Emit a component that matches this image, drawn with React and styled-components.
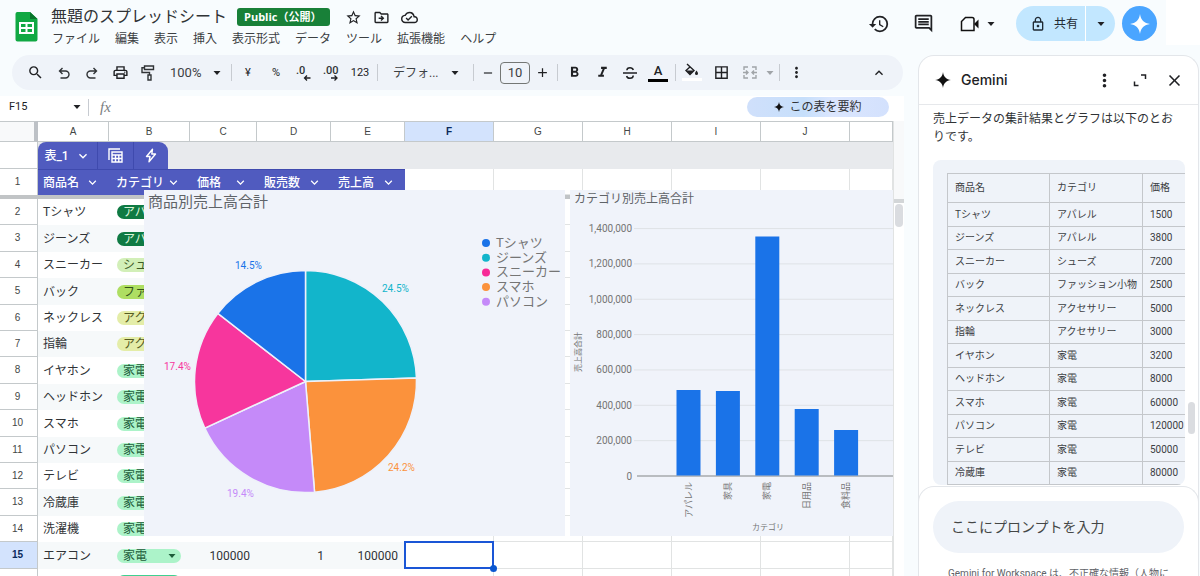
import React from "react";
import styled, { createGlobalStyle } from "styled-components";
import {
  MdStarBorder, MdOutlineDriveFileMove, MdOutlineCloudDone, MdHistory, MdOutlineInsertComment,
  MdSearch, MdOutlinePrint, MdFormatBold, MdFormatItalic,
  MdBorderAll, MdMoreVert, MdKeyboardArrowUp, MdKeyboardArrowDown,
  MdClose, MdOutlineLock, MdAdd, MdRemove,
} from "react-icons/md";

const cjk = '"Noto Sans CJK JP", sans-serif';
const ui = `Roboto, ${cjk}`;

const Global = createGlobalStyle`
  * { box-sizing: border-box; }
  body { margin: 0; background: #f8fcfe; color: #3c4043; font: 12px/16px ${ui}; overflow: hidden; }
  button, input, select { font: inherit; color: inherit; border: 0; padding: 0; margin: 0; background: none; }
  table { border-collapse: collapse; border-spacing: 0; }
  th { font-weight: 400; }
  svg { display: block; flex: none; }
`;

const Page = styled.div`
  display: flex;
  flex-direction: column;
  height: 100vh;
  overflow: hidden;
`;

/* ---------- header ---------- */
const Header = styled.header`
  display: flex;
  align-items: flex-start;
  height: 55px;
  flex: none;
  padding-left: 15px;
`;
const Logo = styled.a`
  width: 23px;
  margin: 11px 13px 0 0;
`;
const Titles = styled.div`
  padding-top: 4px;
  flex: 1;
`;
const TitleRow = styled.div`
  display: flex;
  align-items: center;
  height: 26px;
`;
const Title = styled.h1`
  margin: 0 10px 0 0;
  font: 400 16px/24px ${ui};
  color: #303336;
`;
const Badge = styled.span`
  background: #188038;
  color: #fff;
  font: 700 11px/18px "Open Sans", ${cjk};
  width: 93px;
  padding-left: 7px;
  border-radius: 3px;
  white-space: nowrap;
  margin-right: 9px;
`;
const IconButton = styled.button`
  display: inline-flex;
  align-items: center;
  justify-content: center;
  flex: none;
  width: ${(p) => p.$w || 28}px;
  height: ${(p) => p.$h || 28}px;
  color: ${(p) => p.$color || "#202124"};
  font-size: 11px;
`;
const Menu = styled.nav`
  display: flex;
  gap: 15px;
  padding-left: 1px;
  height: 18px;
  line-height: 18px;
  button { color: #3c4043; white-space: nowrap; }
`;
const Actions = styled.div`
  display: flex;
  align-items: center;
  height: 35px;
  margin-top: 6px;
  padding-right: 9px;
`;
const CallGroup = styled.div`
  display: flex;
  align-items: center;
  margin: 0 19px 0 10px;
`;
const Share = styled.div`
  display: flex;
  height: 35px;
  margin-right: 7px;
  border-radius: 18px;
  background: #c2e7ff;
  overflow: hidden;
  color: #1f2a33;
`;
const ShareMain = styled.button`
  display: flex;
  align-items: center;
  gap: 8px;
  width: 70px;
  padding-left: 14px;
  border-right: 1px solid #fff;
`;
const GeminiButton = styled.button`
  display: flex;
  align-items: center;
  justify-content: center;
  width: 35px;
  height: 35px;
  border-radius: 50%;
  background: #4aa5ff;
`;
const Corner = styled.div`
  width: 34px;
  height: 45px;
  background: #fff;
`;

/* ---------- body ---------- */
const Body = styled.div`
  display: flex;
  flex: 1;
  min-height: 0;
  gap: 14px;
  padding-right: 1px;
`;
const Workspace = styled.main`
  display: flex;
  flex-direction: column;
  flex: 1;
  min-width: 0;
`;
const Toolbar = styled.div`
  display: flex;
  align-items: center;
  flex: none;
  height: 35px;
  margin: 0 1px 6px 12px;
  padding: 0 10px 0 8px;
  border-radius: 18px;
  background: #eff3f9;
`;
const Divider = styled.span`
  width: 6px;
  height: 17px;
  flex: none;
  background: linear-gradient(#c7cbd1, #c7cbd1) center / 1px 100% no-repeat;
`;
const Drop = styled.label`
  display: flex;
  align-items: center;
  flex: none;
  width: ${(p) => p.$w}px;
  padding: 0 ${(p) => p.$end}px 0 ${(p) => p.$start}px;
  font-size: ${(p) => p.$size || 12}px;
  select { appearance: none; flex: 1; min-width: 0; outline: 0; }
`;
const SizeInput = styled.input`
  width: 30px;
  height: 22px;
  border: 1px solid #747775;
  border-radius: 4px;
  text-align: center;
  font-size: 13px;
`;
const Swatch = styled.span`
  display: flex;
  flex-direction: column;
  align-items: center;
  font: 500 13px/14px ${ui};
  &::after {
    content: "";
    width: 20px;
    height: 3px;
    margin-top: 1px;
    background: ${(p) => p.$bar};
  }
`;
const Spacer = styled.span`
  flex: 1;
`;
const FormulaBar = styled.div`
  display: flex;
  align-items: center;
  height: 25px;
  flex: none;
  padding: 0 15px 3px 9px;
  background: #fff;
`;
const NameBox = styled.input`
  width: 60px;
  height: 16px;
  font-size: 11px;
  color: #202124;
`;
const Fx = styled.span`
  margin-left: 9px;
  font: italic 15px/16px "Liberation Serif", serif;
  color: #7a7d80;
`;
const Summarize = styled.button`
  display: flex;
  align-items: center;
  justify-content: center;
  gap: 5px;
  width: 142px;
  height: 20px;
  border-radius: 10px;
  background: linear-gradient(90deg, #d0e0fb, #c6dffb 40%, #dbe6fe 60%, #d3e1fd);
  color: #303336;
`;

/* ---------- sheet ---------- */
const SheetArea = styled.div`
  display: flex;
  flex: 1;
  min-height: 0;
  overflow: hidden;
  background: #fff;
`;
const Grid = styled.div`
  position: relative;
  flex: 1;
  min-width: 0;
`;
const SheetTable = styled.table`
  width: 100%;
  table-layout: fixed;
  border-collapse: separate;
`;
const Letter = styled.th`
  height: 21px;
  padding: 0;
  border: solid #c4c9cb;
  border-width: 1px 1px 1px 0;
  background: ${(p) => (p.$on ? "#d3e3fd" : "#fff")};
  color: ${(p) => (p.$on ? "#0b2a5c" : "#444746")};
  font: ${(p) => (p.$on ? 700 : 400)} 10px/19px "Liberation Sans", sans-serif;
  overflow: hidden;
`;
const SelectAll = styled(Letter)`
  background: #f8f9fa;
  border-right: 4px solid #bdc1c6;
`;
const RowHead = styled.th`
  padding: 0 2px 0 0;
  border-right: 1px solid #c4c9cb;
  border-bottom: ${(p) => (p.$plain ? 0 : 1)}px solid #c4c9cb;
  background: ${(p) => (p.$on ? "#d3e3fd" : "#fff")};
  color: ${(p) => (p.$on ? "#0b2a5c" : "#444746")};
  font: ${(p) => (p.$on ? 700 : 400)} 10px/16px "Liberation Sans", sans-serif;
`;
const TabCell = styled.td`
  padding: 0;
  height: 27px;
  background: #e8eaed;
`;
const TableTab = styled.div`
  display: flex;
  width: 130px;
  height: 27px;
  border-radius: 8px 9px 0 0;
  background: #505bbf;
  color: #fff;
  overflow: hidden;
  button { color: #fff; height: 27px; display: flex; align-items: center; justify-content: center; }
  button + button { border-left: 1px solid #3f4aae; }
  button:first-child { width: 59px; gap: 6px; font-weight: 500; }
  button:nth-child(2) { width: 36px; }
  button:last-child { width: 35px; }
`;
const FieldHead = styled.th`
  height: 26px;
  padding: 0 9px 0 ${(p) => (p.$first ? 5 : 7)}px;
  background: #505bbf;
  border-top: 1px solid #3f4aae;
  color: #fff;
  font-weight: 500;
  div { display: flex; justify-content: space-between; align-items: center; white-space: nowrap; }
`;
const FreezeBar = styled.td`
  height: 4px;
  padding: 0;
  background: #c1c4c6;
`;
const BodyRow = styled.tr`
  height: 26px;
  &:nth-child(5n + 2), &:nth-child(5n + 4) { height: 27px; }
  &:nth-child(even) td:not([data-open]) { background: #f6f9fa; }
`;
const Cell = styled.td`
  padding: 0 7px 0 ${(p) => (p.$first ? 5 : 8)}px;
  text-align: ${(p) => (p.$num ? "right" : "left")};
  white-space: nowrap;
  overflow: hidden;
  color: #303336;
`;
const OpenCell = styled.td`
  padding: 0;
  border: solid #e1e3e3;
  border-width: 0 1px 1px 0;
`;
const ActiveCell = styled(OpenCell)`
  position: relative;
  &::before {
    content: "";
    position: absolute;
    inset: -1px;
    border: 2px solid #1a56d6;
  }
  &::after {
    content: "";
    position: absolute;
    right: -4px;
    bottom: -4px;
    width: 7px;
    height: 7px;
    border-radius: 50%;
    background: #0b57d0;
  }
`;
const Chip = styled.span`
  display: flex;
  align-items: center;
  justify-content: space-between;
  width: 64px;
  height: 14px;
  padding: 0 5px 0 6px;
  border-radius: 7px;
  background: ${(p) => p.$bg};
  color: ${(p) => p.$fg};
  line-height: 14px;
`;
const Chart = styled.figure`
  position: absolute;
  margin: 0;
  top: 69px;
  left: ${(p) => p.$left}px;
  right: ${(p) => (p.$fill ? "0" : "auto")};
  height: 346px;
  background: #f0f3fa;
  overflow: hidden;
`;
const ScrollRail = styled.div`
  width: 11px;
  flex: none;
  border-left: 1px solid #e1e3e3;
  background: #fff;
  &::before {
    content: "";
    display: block;
    height: 78px;
    background: #f8f9fa;
    border-bottom: 4px solid #d3d6d8;
  }
  &::after {
    content: "";
    display: block;
    width: 8px;
    height: 23px;
    margin: 1px 0 0 1px;
    border-radius: 4px;
    background: #dadce0;
  }
`;

/* ---------- Gemini panel ---------- */
const Panel = styled.aside`
  position: relative;
  display: flex;
  flex-direction: column;
  width: 281px;
  flex: none;
  border: 1px solid #e3e6ea;
  border-bottom: 0;
  border-radius: 16px 16px 0 0;
  background: #fff;
  overflow: hidden;
`;
const PanelHead = styled.div`
  display: flex;
  align-items: center;
  flex: none;
  height: 49px;
  padding: 0 6px 0 16px;
  border-bottom: 1px solid #e6e8eb;
  h2 { flex: 1; margin: 0 0 0 10px; font: 500 14px/20px Inter, sans-serif; color: #202124; }
`;
const PanelBody = styled.div`
  flex: 1;
  min-height: 0;
  overflow: hidden;
  padding: 5px 13px 0 14px;
  p { margin: 0 0 14px; padding-right: 8px; line-height: 18px; color: #303336; }
`;
const Card = styled.div`
  padding: 13px 0 0 14px;
  border-radius: 8px;
  background: #eff3f9;
  overflow: hidden;
`;
const DataTable = styled.table`
  width: 270px;
  table-layout: fixed;
  font-size: 10px;
  line-height: 14px;
  color: #3c4043;
  th, td { border: 1px solid #c4c7cb; padding: 0 7px; text-align: left; white-space: nowrap; }
  thead tr { height: 29px; }
  tbody tr { height: 24px; }
  tbody tr:nth-child(even) { height: 23px; }
`;
const PanelThumb = styled.span`
  position: absolute;
  right: 3px;
  top: 346px;
  width: 7px;
  height: 32px;
  border-radius: 4px;
  background: #dadce0;
`;
const PanelFoot = styled.form`
  flex: none;
  height: 90px;
  margin: 0 -1px;
  padding: 14px 14px 0;
  border: 1px solid #e3e6ea;
  border-bottom: 0;
  border-radius: 16px 16px 0 0;
  background: #fff;
  overflow: hidden;
`;
const Prompt = styled.input`
  display: block;
  width: 100%;
  height: 52px;
  padding: 0 18px;
  border-radius: 26px;
  background: #eff3f9;
  font-size: 14px;
  outline: 0;
  &::placeholder { color: #444746; opacity: 1; }
`;
const Note = styled.small`
  display: block;
  margin: 14px 0 0 15px;
  font-size: 10px;
  line-height: 14px;
  white-space: nowrap;
  color: #5f6368;
`;

/* ---------- drawings ---------- */
const Spark = ({ size, fill = "#111" }) => (
  <svg width={size} height={size} viewBox="0 0 24 24" aria-hidden="true">
    <path fill={fill} d="M12 0C12.9 7 17 11.1 24 12 17 12.9 12.9 17 12 24 11.1 17 7 12.9 0 12 7 11.1 11.1 7 12 0Z" />
  </svg>
);
const Caret = ({ color = "#202124" }) => (
  <svg width="8" height="4" viewBox="0 0 8 4" aria-hidden="true"><path fill={color} d="M.5 0H7.500L4 4Z" /></svg>
);
const SheetsLogo = () => (
  <svg width="23" height="31" viewBox="0 0 23 31" aria-hidden="true">
    <path fill="#11a843" d="M2 1H15L22.500 8V28.500A2 2 0 0 1 20.500 30.500H2.500A2 2 0 0 1 .5 28.500V3A2 2 0 0 1 2 1Z" />
    <path fill="#07752b" d="M15 1L22.500 8H15Z" />
    <path fill="#fff" fillRule="evenodd" d="M4 11H19V23H4ZM6 13V16H10.500V13ZM12.500 13V16H17V13ZM6 18V21H10.500V18ZM12.500 18V21H17V18Z" />
  </svg>
);
const Video = () => (
  <svg width="20" height="16" viewBox="0 0 20 16" aria-hidden="true">
    <path fill="none" stroke="#111" strokeWidth="1.500" d="M5.500 1.500H12A2 2 0 0 1 14 3.500V14.500H1.500V5.500Z" />
    <path fill="#111" d="M14 8L18.500 3.500V12.500Z" />
  </svg>
);
const Turn = ({ flip }) => (
  <svg width="12" height="12" viewBox="0 0 12 12" fill="none" stroke="#303336" strokeWidth="1.400" aria-hidden="true">
    <path
      transform={flip ? "translate(12 0) scale(-1 1)" : undefined}
      d="M4.500 1L1.500 4L4.500 7M1.500 4H7.500A3.500 3.500 0 0 1 7.500 11H2.500"
    />
  </svg>
);
const Roller = () => (
  <svg width="14" height="16" viewBox="0 0 14 16" fill="none" stroke="#303336" strokeWidth="1.400" aria-hidden="true">
    <path d="M3.500 1H12.500V4.500H3.500ZM3.500 2.700H1V7.500H8.500V10M7 10H10V15H7Z" />
  </svg>
);
const Strike = () => (
  <svg width="14" height="14" viewBox="0 0 14 14" fill="none" stroke="#202124" strokeWidth="1.500" aria-hidden="true">
    <path d="M10.300 4C9.800 2.400 8.700 1.700 7 1.700C5 1.700 3.900 2.700 3.900 4.300M0 7H14M10.200 9.500C10.200 11.300 9 12.300 7 12.300C5.200 12.300 4 11.500 3.600 10" />
  </svg>
);
const Decimal = ({ label, dir }) => (
  <svg width="18" height="18" viewBox="0 0 18 18" aria-hidden="true">
    <text x={dir === "left" ? 1 : 0} y="10" fontSize="11" fontWeight="500" fill="#303336">{label}</text>
    {dir === "left"
      ? <path fill="none" stroke="#202124" strokeWidth="1.300" d="M15.500 14H9.500M12 11.500L9.500 14L12 16.500" />
      : <path fill="none" stroke="#202124" strokeWidth="1.300" d="M8 14H14M11.500 11.500L14 14L11.500 16.500" />}
  </svg>
);
const Bucket = () => (
  <svg width="20" height="19" viewBox="0 0 20 19" aria-hidden="true">
    <path fill="none" stroke="#202124" strokeWidth="1.400" d="M5 1L12 7.500L8 11.500L4 7.500L8.500 3.500" />
    <path fill="#202124" d="M4 7.500H12L8 11.500ZM14.500 7.500C15.500 9 16 9.800 16 10.500A1.500 1.500 0 0 1 13 10.500C13 9.800 13.500 9 14.500 7.500Z" />
    <path fill="#fff" d="M0 15H20V18H0Z" />
  </svg>
);
const Merge = () => (
  <svg width="14" height="13" viewBox="0 0 14 13" fill="none" stroke="#a0a4a8" strokeWidth="1.400" aria-hidden="true">
    <path d="M5 1H1V4M9 1H13V4M5 12H1V9M9 12H13V9M0 6.500H5M3 4.500L5 6.500L3 8.500M14 6.500H9M11 4.500L9 6.500L11 8.500" />
  </svg>
);
const TableIcon = () => (
  <svg width="15" height="15" viewBox="0 0 15 15" aria-hidden="true">
    <path fill="none" stroke="#fff" strokeWidth="1.400" d="M1 12V1H12M4 4H14V14H4ZM4 7H14M4 10.500H14M7.500 7V14M10.800 7V14" />
  </svg>
);
const Bolt = () => (
  <svg width="12" height="15" viewBox="0 0 12 15" aria-hidden="true">
    <path fill="none" stroke="#fff" strokeWidth="1.400" strokeLinejoin="round" d="M7.500 1.200L1.500 8.500H5L4 13.800L10.500 6H6.800Z" />
  </svg>
);
const Expand = () => (
  <svg width="14" height="14" viewBox="0 0 14 14" fill="none" stroke="#202124" strokeWidth="1.500" aria-hidden="true">
    <path d="M8 2H12.500V6M1.500 8.500V12.500H5.500" />
  </svg>
);

/* ---------- data ---------- */
const products = [
  ["Tシャツ", "アパレル", "#0f7a43", "#d8f5d8"],
  ["ジーンズ", "アパレル", "#0f7a43", "#d8f5d8"],
  ["スニーカー", "シューズ", "#d2efb8", "#3d5a26"],
  ["バック", "ファッション小物", "#aede62", "#33511a"],
  ["ネックレス", "アクセサリー", "#e4eda8", "#565c22"],
  ["指輪", "アクセサリー", "#e4eda8", "#565c22"],
  ["イヤホン"], ["ヘッドホン"], ["スマホ"], ["パソコン"], ["テレビ"], ["冷蔵庫"], ["洗濯機"], ["エアコン"],
].map(([name, cat = "家電", bg = "#acf3c9", fg = "#1d5c3a"]) => ({ name, cat, bg, fg }));

const prices = [1500, 3800, 7200, 2500, 5000, 3000, 3200, 8000, 60000, 120000, 50000, 80000];
const fields = ["商品名", "カテゴリ", "価格", "販売数", "売上高"];
const letters = ["A", "B", "C", "D", "E", "F", "G", "H", "I", "J"];
const widths = [38, 71, 81, 67, 74, 74, 89, 89, 89, 89, 89];
const menus = ["ファイル", "編集", "表示", "挿入", "表示形式", "データ", "ツール", "拡張機能", "ヘルプ"];

const Cols = () => (
  <colgroup>
    {widths.map((w, i) => <col key={i} width={w} />)}
    <col />
  </colgroup>
);
const OpenCells = ({ n = 6 }) => Array.from({ length: n }, (_, i) => <OpenCell key={i} data-open />);

const slices = [
  [24.5, "#12b5cb", 238, 102],
  [24.2, "#fb923c", 244, 281],
  [19.4, "#c58af9", 83, 307],
  [17.4, "#f7369d", 20, 180],
  [14.5, "#1a73e8", 91, 79],
];
const legend = [["Tシャツ", "#1a73e8"], ["ジーンズ", "#12b5cb"], ["スニーカー", "#f72a97"], ["スマホ", "#fb923c"], ["パソコン", "#c58af9"]];

function PieChart() {
  const cx = 161.5, cy = 191.5, r = 111;
  let sum = 0;
  const at = (v) => {
    const a = (v / 100) * 2 * Math.PI;
    return `${cx + r * Math.sin(a)} ${cy - r * Math.cos(a)}`;
  };
  return (
    <svg width="421" height="346" viewBox="0 0 421 346" role="img" aria-label="商品別売上高合計">
      <text x="4" y="17" fontSize="15" fill="#5f6368">商品別売上高合計</text>
      {slices.map(([v, color, x, y]) => {
        const from = sum;
        sum += v;
        return (
          <g key={color}>
            <path d={`M${cx} ${cy}L${at(from)}A${r} ${r} 0 0 1 ${at(sum)}Z`} fill={color} stroke="#eef1fa" strokeWidth="1.500" />
            <text x={x} y={y} fontSize="10" fill={color}>{v}%</text>
          </g>
        );
      })}
      {legend.map(([name, color], i) => (
        <g key={name}>
          <circle cx="342" cy={53 + i * 14.7} r="4" fill={color} />
          <text x="352" y={57 + i * 14.7} fontSize="13" fill="#757575">{name}</text>
        </g>
      ))}
    </svg>
  );
}

const bars = [["アパレル", 200], ["家具", 201], ["家電", 46.5], ["日用品", 219], ["食料品", 240]];
const ticks = ["0", "200,000", "400,000", "600,000", "800,000", "1,000,000", "1,200,000", "1,400,000"];

function BarChart() {
  return (
    <svg width="323" height="346" viewBox="0 0 323 346" role="img" aria-label="カテゴリ別売上高合計">
      <text x="4" y="13" fontSize="12" fill="#5f6368">カテゴリ別売上高合計</text>
      {ticks.map((t, i) => {
        const y = 286 - i * 35.35;
        return (
          <g key={t}>
            <path d={`M${i ? 64 : 67} ${y}H323`} stroke={i ? "#dfe2e6" : "#b9bcc0"} strokeWidth={i ? 1 : 2} />
            <text x="62" y={y + 3.5} fontSize="10" textAnchor="end" fill="#757575">{t}</text>
          </g>
        );
      })}
      {bars.map(([name, top], i) => {
        const x = 106.5 + i * 39.4;
        return (
          <g key={name}>
            <rect x={x} y={top} width="24" height={285.5 - top} fill="#1a73e8" />
            <text transform={`translate(${x + 15} 292) rotate(-90)`} fontSize="9" textAnchor="end" fill="#757575">{name}</text>
          </g>
        );
      })}
      <text transform="translate(11 162) rotate(-90)" fontSize="8" textAnchor="middle" fill="#757575">売上高合計</text>
      <text x="198" y="340" fontSize="8" textAnchor="middle" fill="#757575">カテゴリ</text>
    </svg>
  );
}

function TopBar() {
  return (
    <Header>
      <Logo href="#" aria-label="スプレッドシート"><SheetsLogo /></Logo>
      <Titles>
        <TitleRow>
          <Title>無題のスプレッドシート</Title>
          <Badge>Public（公開）</Badge>
          <IconButton aria-label="スター"><MdStarBorder size={17} /></IconButton>
          <IconButton aria-label="移動"><MdOutlineDriveFileMove size={17} /></IconButton>
          <IconButton aria-label="保存済み"><MdOutlineCloudDone size={17} /></IconButton>
        </TitleRow>
        <Menu>{menus.map((m) => <button key={m}>{m}</button>)}</Menu>
      </Titles>
      <Actions>
        <IconButton $w={44} aria-label="変更履歴"><MdHistory size={22} /></IconButton>
        <IconButton $w={44} aria-label="コメント"><MdOutlineInsertComment size={21} /></IconButton>
        <CallGroup>
          <IconButton $w={30} aria-label="ビデオ通話"><Video /></IconButton>
          <IconButton $w={12} aria-label="通話メニュー"><Caret /></IconButton>
        </CallGroup>
        <Share>
          <ShareMain><MdOutlineLock size={16} />共有</ShareMain>
          <IconButton $w={29} $h={35} aria-label="共有メニュー"><Caret /></IconButton>
        </Share>
        <GeminiButton aria-label="Gemini を開く"><Spark size={20} fill="#fff" /></GeminiButton>
      </Actions>
      <Corner />
    </Header>
  );
}

function Tools() {
  return (
    <Toolbar role="toolbar">
      <IconButton $w={30} aria-label="検索"><MdSearch size={17} /></IconButton>
      <IconButton aria-label="元に戻す"><Turn /></IconButton>
      <IconButton aria-label="やり直し"><Turn flip /></IconButton>
      <IconButton aria-label="印刷"><MdOutlinePrint size={17} /></IconButton>
      <IconButton aria-label="書式を貼り付け"><Roller /></IconButton>
      <Drop $w={66} $start={8} $end={7} $size={13}>
        <select aria-label="ズーム"><option>100%</option></select><Caret />
      </Drop>
      <Divider />
      <IconButton>¥</IconButton>
      <IconButton>%</IconButton>
      <IconButton aria-label="小数点以下を減らす"><Decimal label=".0" dir="left" /></IconButton>
      <IconButton aria-label="小数点以下を増やす"><Decimal label=".00" dir="right" /></IconButton>
      <IconButton>123</IconButton>
      <Divider />
      <Drop $w={90} $start={13} $end={11}>
        <select aria-label="フォント"><option>デフォ...</option></select><Caret />
      </Drop>
      <Divider />
      <IconButton $w={24} aria-label="縮小"><MdRemove size={14} /></IconButton>
      <SizeInput aria-label="フォントサイズ" defaultValue="10" />
      <IconButton $w={24} aria-label="拡大"><MdAdd size={15} /></IconButton>
      <Divider />
      <IconButton aria-label="太字"><MdFormatBold size={17} /></IconButton>
      <IconButton aria-label="斜体"><MdFormatItalic size={17} /></IconButton>
      <IconButton aria-label="取り消し線"><Strike /></IconButton>
      <IconButton aria-label="テキストの色"><Swatch $bar="#000">A</Swatch></IconButton>
      <Divider />
      <IconButton aria-label="塗りつぶしの色"><Bucket /></IconButton>
      <IconButton $w={30} aria-label="枠線"><MdBorderAll size={17} /></IconButton>
      <IconButton aria-label="セルを結合"><Merge /></IconButton>
      <IconButton $w={12} aria-label="結合の種類"><Caret color="#a0a4a8" /></IconButton>
      <Divider />
      <IconButton aria-label="その他"><MdMoreVert size={17} /></IconButton>
      <Spacer />
      <IconButton aria-label="メニューを隠す"><MdKeyboardArrowUp size={16} /></IconButton>
    </Toolbar>
  );
}

function Sheet() {
  return (
    <SheetArea>
      <Grid>
        <SheetTable>
          <Cols />
          <thead>
            <tr>
              <SelectAll as="td" />
              {letters.map((l) => <Letter key={l} $on={l === "F"}>{l}</Letter>)}
              <Letter as="td" />
            </tr>
          </thead>
          <tbody>
            <tr>
              <RowHead />
              <TabCell colSpan={11}>
                <TableTab>
                  <button>表_1 <MdKeyboardArrowDown size={16} /></button>
                  <button aria-label="表の設定"><TableIcon /></button>
                  <button aria-label="クイック操作"><Bolt /></button>
                </TableTab>
              </TabCell>
            </tr>
            <tr>
              <RowHead $plain>1</RowHead>
              {fields.map((f, i) => (
                <FieldHead key={f} $first={i === 0}><div>{f}<MdKeyboardArrowDown size={15} /></div></FieldHead>
              ))}
              <OpenCells />
            </tr>
            <tr><FreezeBar colSpan={12} /></tr>
          </tbody>
        </SheetTable>
        <SheetTable>
          <Cols />
          <tbody>
            {products.map((p, i) => {
              const on = i === 13;
              return (
                <BodyRow key={p.name}>
                  <RowHead $on={on}>{i + 2}</RowHead>
                  <Cell $first>{p.name}</Cell>
                  <Cell>
                    <Chip $bg={p.bg} $fg={p.fg}>{on ? p.cat : p.cat.slice(0, 2)}{on && <Caret color="#1d5c3a" />}</Chip>
                  </Cell>
                  <Cell $num>{on && "100000"}</Cell>
                  <Cell $num>{on && "1"}</Cell>
                  <Cell $num>{on && "100000"}</Cell>
                  {on ? <><ActiveCell data-open /><OpenCells n={5} /></> : <OpenCells />}
                </BodyRow>
              );
            })}
            <BodyRow>
              <RowHead />
              <Cell />
              <Cell><Chip $bg="#40d090" $fg="#0f3d26" /></Cell>
              <Cell /><Cell /><Cell />
              <OpenCells />
            </BodyRow>
          </tbody>
        </SheetTable>
        <Chart $left={144}><PieChart /></Chart>
        <Chart $left={570} $fill><BarChart /></Chart>
      </Grid>
      <ScrollRail />
    </SheetArea>
  );
}

function GeminiPanel() {
  return (
    <Panel>
      <PanelHead>
        <Spark size={16} />
        <h2>Gemini</h2>
        <IconButton $w={35} aria-label="メニュー"><MdMoreVert size={21} /></IconButton>
        <IconButton $w={35} aria-label="展開"><Expand /></IconButton>
        <IconButton $w={35} aria-label="閉じる"><MdClose size={19} /></IconButton>
      </PanelHead>
      <PanelBody>
        <p>売上データの集計結果とグラフは以下のとおりです。</p>
        <Card>
          <DataTable>
            <colgroup><col width="102" /><col width="93" /><col /></colgroup>
            <thead><tr><th>商品名</th><th>カテゴリ</th><th>価格</th></tr></thead>
            <tbody>
              {prices.map((price, i) => (
                <tr key={i}><td>{products[i].name}</td><td>{products[i].cat}</td><td>{price}</td></tr>
              ))}
            </tbody>
          </DataTable>
        </Card>
      </PanelBody>
      <PanelThumb />
      <PanelFoot>
        <Prompt aria-label="プロンプト" placeholder="ここにプロンプトを入力" />
        <Note>Gemini for Workspace は、不正確な情報（人物に</Note>
      </PanelFoot>
    </Panel>
  );
}

export default function App() {
  return (
    <Page>
      <Global />
      <TopBar />
      <Body>
        <Workspace>
          <Tools />
          <FormulaBar>
            <NameBox aria-label="名前ボックス" defaultValue="F15" />
            <IconButton $w={16} $h={16} aria-label="範囲"><Caret /></IconButton>
            <Divider />
            <Fx>fx</Fx>
            <Spacer />
            <Summarize><Spark size={10} />この表を要約</Summarize>
          </FormulaBar>
          <Sheet />
        </Workspace>
        <GeminiPanel />
      </Body>
    </Page>
  );
}
